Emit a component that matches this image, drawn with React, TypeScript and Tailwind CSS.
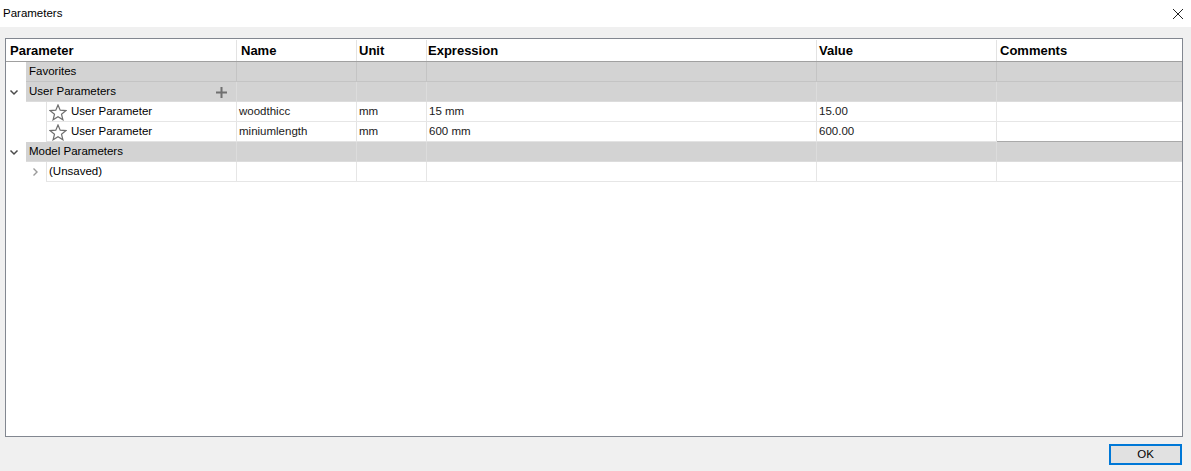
import React from 'react';

type Row = {
    kind: 'group' | 'item';
    label: string;
    expander?: 'down' | 'right';
    star?: boolean;
    plus?: boolean;
    name?: string;
    unit?: string;
    expr?: string;
    value?: string;
    bottom: string;
};

const rows: Row[] = [
    { kind: 'group', label: 'Favorites', bottom: 'border-[#c4c4c4]' },
    { kind: 'group', label: 'User Parameters', expander: 'down', plus: true, bottom: 'border-[#dcdcdc]' },
    { kind: 'item', label: 'User Parameter', star: true, name: 'woodthicc', unit: 'mm', expr: '15 mm', value: '15.00', bottom: 'border-[#e6e6e6]' },
    { kind: 'item', label: 'User Parameter', star: true, name: 'miniumlength', unit: 'mm', expr: '600 mm', value: '600.00', bottom: 'border-[#a9a9a9]' },
    { kind: 'group', label: 'Model Parameters', expander: 'down', bottom: 'border-[#dcdcdc]' },
    { kind: 'item', label: '(Unsaved)', expander: 'right', bottom: 'border-[#e6e6e6]' },
];

const Chevron = ({ dir }: { dir: 'down' | 'right' }) => (
    <svg width="10" height="10" viewBox="0 0 10 10" fill="none">
        {dir === 'down' ? (
            <path d="M1.5 3.5 L5 7 L8.5 3.5" stroke="#4a4a4a" strokeWidth="1.5" />
        ) : (
            <path d="M3.5 1.5 L7 5 L3.5 8.5" stroke="#9a9a9a" strokeWidth="1.4" />
        )}
    </svg>
);

const Star = () => (
    <svg width="18" height="17" viewBox="0 0 18 17" fill="none">
        <path
            d="M9 1 L11.2 6.2 L16.8 6.6 L12.5 10.2 L13.9 15.8 L9 12.8 L4.1 15.8 L5.5 10.2 L1.2 6.6 L6.8 6.2 Z"
            stroke="#6e6e6e"
            strokeWidth="1.2"
            strokeLinejoin="miter"
        />
    </svg>
);

const Plus = () => (
    <svg width="11" height="11" viewBox="0 0 11 11">
        <rect x="4.5" y="0" width="2" height="11" fill="#707070" />
        <rect x="0" y="4.5" width="11" height="2" fill="#707070" />
    </svg>
);

export default function App() {
    const font = { fontFamily: '"Liberation Sans", Arial, sans-serif' };
    const cols = ['w-[120px]', 'w-[70px]', 'w-[390px]', 'w-[180px]'];

    return (
        <div className="w-[1191px] h-[471px] flex flex-col bg-[#f0f0f0] text-[#000] overflow-hidden" style={font}>
            {/* Title bar */}
            <div className="h-[27px] bg-white flex items-center justify-between pl-[3px] pr-[7px]">
                <span className="text-[11.5px] leading-none pt-[1px]">Parameters</span>
                <svg width="12" height="12" viewBox="0 0 12 12">
                    <path d="M1 1 L11 11 M11 1 L1 11" stroke="#222" strokeWidth="1" />
                </svg>
            </div>

            {/* Table */}
            <div className="mt-[11px] ml-[5px] w-[1178px] h-[399px] border border-[#828790] bg-white text-[11.5px]">
                {/* Header */}
                <div className="flex h-[23px] pt-[1px] border-b border-[#a0a0a0] font-bold text-[13px]">
                    <div className="w-[231px] border-r border-[#e3e3e3] pl-[4px] flex items-center">Parameter</div>
                    <div className="w-[120px] border-r border-[#e3e3e3] pl-[4px] flex items-center">Name</div>
                    <div className="w-[70px] border-r border-[#e3e3e3] pl-[2px] flex items-center">Unit</div>
                    <div className="w-[390px] border-r border-[#e3e3e3] pl-[1px] flex items-center">Expression</div>
                    <div className="w-[180px] border-r border-[#e3e3e3] pl-[2px] flex items-center">Value</div>
                    <div className="flex-1 pl-[3px] flex items-center">Comments</div>
                </div>

                {rows.map((r, i) => {
                    const group = r.kind === 'group';
                    const cellBg = group ? 'bg-[#d3d3d3]' : 'bg-white';
                    const sep = group ? 'border-[#bfbfbf]' : 'border-[#e3e3e3]';
                    return (
                        <div key={i} className="flex h-[20px]">
                            <div className="w-[231px] flex">
                                <div className={`${group ? 'w-[20px]' : 'w-[40px]'} flex items-center ${group ? 'pl-[3px]' : 'pl-[24px]'}`}>
                                    {r.expander && <Chevron dir={r.expander} />}
                                </div>
                                <div
                                    className={`flex-1 flex items-center pt-[1px] border-b ${r.bottom} border-r ${sep} ${cellBg} ${group ? 'pl-[3px]' : 'border-l border-l-[#e3e3e3] pl-[2px]'}`}
                                >
                                    {r.star && (
                                        <span className="mr-[4px] flex items-center">
                                            <Star />
                                        </span>
                                    )}
                                    <span className="flex-1 whitespace-nowrap">{r.label}</span>
                                    {r.plus && (
                                        <span className="mr-[9px] flex items-center">
                                            <Plus />
                                        </span>
                                    )}
                                </div>
                            </div>
                            {[r.name, r.unit, r.expr, r.value].map((v, j) => (
                                <div
                                    key={j}
                                    className={`${cols[j]} flex items-center pt-[1px] pl-[2px] border-b ${r.bottom} border-r ${sep} ${cellBg} whitespace-nowrap text-[#1a1a1a]`}
                                >
                                    {v}
                                </div>
                            ))}
                            <div className={`flex-1 border-b ${r.bottom} ${cellBg}`} />
                        </div>
                    );
                })}
            </div>

            {/* Footer */}
            <div className="flex justify-end pr-[9px] mt-[7px]">
                <button className="w-[73px] h-[21px] border-2 border-[#0078d7] bg-[#e1e1e1] text-[11.5px] flex items-center justify-center">
                    OK
                </button>
            </div>
        </div>
    );
}
